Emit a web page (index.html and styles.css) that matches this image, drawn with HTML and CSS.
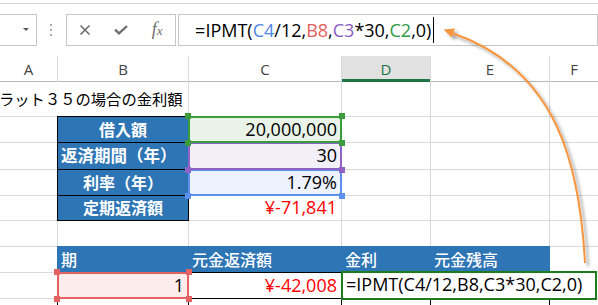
FILE: index.html
```html
<!DOCTYPE html>
<html lang="ja">
<head>
<meta charset="utf-8">
<title>IPMT</title>
<link rel="stylesheet" href="styles.css">
</head>
<body>
<div class="app">
  <div class="fbar">
    <div class="namebox"><span class="dd"></span></div>
    <div class="grip"><i></i><i></i><i></i></div>
    <div class="fbtns">
      <span class="slot"><svg width="12" height="12" viewBox="0 0 12 12"><path d="M1.5 1.5L10.5 10.5M10.5 1.5L1.5 10.5" stroke="#6e6e6e" stroke-width="1.6" fill="none"/></svg></span>
      <span class="slot"><svg width="14" height="10" viewBox="0 0 14 10"><path d="M1 4.6L5 8.4L13 1" stroke="#6e6e6e" stroke-width="2.3" fill="none"/></svg></span>
      <span class="slot"><span class="fx">f<small>x</small></span></span>
    </div>
    <div class="finput"><span class="ftext">=IPMT(<span class="rb">C4</span>/12,<span class="rr">B8</span>,<span class="rp">C3</span>*30,<span class="rg">C2</span>,0)</span><span class="caret"></span></div>
  </div>

  <div class="sheet">
    <div class="ch">A</div>
    <div class="ch">B</div>
    <div class="ch">C</div>
    <div class="ch ch-on">D</div>
    <div class="ch">E</div>
    <div class="ch">F</div>

    <div class="c title">ラット３５の場合の金利額</div>
    <div class="c"></div>
    <div class="c"></div>
    <div class="c"></div>
    <div class="c"></div>

    <div class="c"></div>
    <div class="c lbl">借入額</div>
    <div class="c val rng rng-g"><span class="h tl"></span><span class="h tr"></span><span class="h bl"></span><span class="h br"></span>20,000,000</div>
    <div class="c"></div>
    <div class="c"></div>
    <div class="c"></div>

    <div class="c"></div>
    <div class="c lbl lbl-wide">返済期間（年）</div>
    <div class="c val rng rng-p"><span class="h bl"></span><span class="h br"></span>30</div>
    <div class="c"></div>
    <div class="c"></div>
    <div class="c"></div>

    <div class="c"></div>
    <div class="c lbl">利率（年）</div>
    <div class="c val rng rng-b"><span class="h bl"></span><span class="h br"></span>1.79%</div>
    <div class="c"></div>
    <div class="c"></div>
    <div class="c"></div>

    <div class="c"></div>
    <div class="c lbl">定期返済額</div>
    <div class="c val neg">¥-71,841</div>
    <div class="c"></div>
    <div class="c"></div>
    <div class="c"></div>

    <div class="c"></div>
    <div class="c"></div>
    <div class="c"></div>
    <div class="c"></div>
    <div class="c"></div>
    <div class="c"></div>

    <div class="c"></div>
    <div class="c th">期</div>
    <div class="c th">元金返済額</div>
    <div class="c th">金利</div>
    <div class="c th">元金残高</div>
    <div class="c"></div>

    <div class="c"></div>
    <div class="c val tb rng rng-r"><span class="h tl"></span><span class="h tr"></span><span class="h bl"></span><span class="h br"></span>1</div>
    <div class="c val tb neg">¥-42,008</div>
    <div class="c tb edit-host"><div class="editor">=IPMT(C4/12,B8,C3*30,C2,0)</div></div>
    <div class="c tb"></div>
    <div class="c"></div>

    <div class="c"></div>
    <div class="c val tb">2</div>
    <div class="c val tb neg">¥-42,071</div>
    <div class="c tb"></div>
    <div class="c tb"></div>
    <div class="c"></div>
  </div>

  <svg class="arrow" width="598" height="305" viewBox="0 0 598 305">
    <defs>
      <filter id="sh" x="-20%" y="-20%" width="140%" height="140%">
        <feDropShadow dx="3" dy="3" stdDeviation="1.6" flood-color="#000" flood-opacity="0.35"/>
      </filter>
    </defs>
    <g filter="url(#sh)">
      <path d="M585 263C580 170 560 70 452 33" stroke="#f7963f" stroke-width="2" fill="none"/>
      <path d="M443.5 29.5L455 28.6L451.8 37.6Z" fill="#f7963f"/>
    </g>
  </svg>
</div>
</body>
</html>
```
FILE: styles.css
```css
* { box-sizing: border-box; margin: 0; padding: 0; }
html, body { width: 598px; height: 305px; overflow: hidden; background: #fff; }
body { font-family: "Open Sans", "Noto Sans CJK JP", sans-serif; color: #000; }

.app { position: relative; width: 598px; height: 305px; overflow: hidden; }

/* formula bar */
.fbar {
  margin-top: 3px;
  height: 53px;
  border-top: 1px solid #d5d5d5;
  padding-top: 10px;
  display: flex;
  align-items: flex-start;
}
.namebox {
  position: relative;
  width: 38px;
  height: 32px;
  border: 1px solid #c6c6c6;
  border-left: none;
}
.dd {
  position: absolute;
  left: 23px;
  top: 13px;
  width: 0;
  height: 0;
  border-left: 3.5px solid transparent;
  border-right: 3.5px solid transparent;
  border-top: 3.5px solid #595959;
}
.grip {
  margin-left: 13px;
  margin-top: 10px;
  display: flex;
  flex-direction: column;
  gap: 3px;
}
.grip i { display: block; width: 2px; height: 2px; background: #ababab; }
.fbtns {
  margin-left: 14px;
  width: 111px;
  height: 32px;
  border: 1px solid #c6c6c6;
  display: flex;
}
.slot {
  width: 36px;
  height: 30px;
  display: flex;
  align-items: center;
  justify-content: center;
}
.fx {
  font-family: "Liberation Serif", serif;
  font-style: italic;
  font-size: 18px;
  color: #6e6e6e;
  line-height: 1;
  margin-top: -3px;
}
.fx small { font-size: 13px; }
.finput {
  margin-left: 2px;
  width: 430px;
  height: 32px;
  border: 1px solid #c6c6c6;
  padding-left: 16px;
  display: flex;
  align-items: center;
  font-size: 18px;
  white-space: nowrap;
}
.ftext { line-height: 1; margin-top: -1px; }
.rb { color: #4f86e8; }
.rr { color: #e35d5d; }
.rp { color: #8a5cc4; }
.rg { color: #2e9a45; }
.caret { display: inline-block; width: 1px; height: 26px; background: #000; margin-left: 2px; }

/* sheet */
.sheet {
  display: grid;
  grid-template-columns: 57px 130px 152px 88px 118px 1fr;
  grid-template-rows: 25px 34px 25px 26px 25px 24px 25px 25px 25px 25px;
  gap: 1px;
  background: #dadada;
}
.ch {
  background: #fff;
  color: #444;
  font-size: 15px;
  display: flex;
  align-items: center;
  justify-content: center;
  box-shadow: 0 1px 0 #b8b8b8;
}
.ch-on {
  background: #e1e1e1;
  color: #217346;
  box-shadow: inset 0 -2px 0 #217346, 0 1px 0 #217346;
}
.c {
  background: #fff;
  display: flex;
  align-items: center;
  white-space: nowrap;
  font-size: 18px;
  padding: 0 4px 2px;
}
.title {
  grid-column: 1 / 3;
  font-family: "Noto Sans CJK JP", sans-serif;
  font-size: 15.3px;
  padding-left: 0;
  margin-left: -1px;
}
.lbl {
  background: #2e75b6;
  color: #fff;
  font-family: "Noto Sans CJK JP", sans-serif;
  font-weight: 700;
  font-size: 16px;
  justify-content: center;
  outline: 1px solid #000;
}
.lbl-wide { justify-content: flex-start; padding-left: 3px; font-size: 16.5px; }
.val { justify-content: flex-end; }
.neg { color: #ff0000; }
.th {
  background: #2e75b6;
  color: #fff;
  font-family: "Noto Sans CJK JP", sans-serif;
  font-weight: 500;
  font-size: 16px;
  padding-left: 3px;
  outline: 1px solid #2e75b6;
}
.tb { outline: 1px solid #000; }

/* reference range boxes */
.rng { position: relative; outline-width: 2px; outline-style: solid; outline-offset: -1px; }
.rng-g { background: #e9f3e7; outline-color: #3a9c3d; z-index: 3; }
.rng-p { background: #f2eff9; outline-color: #8e63c5; z-index: 2; }
.rng-b { background: #edf2fd; outline-color: #5d8ff0; z-index: 1; }
.rng-r { background: #fcecec; outline-color: #e46262; z-index: 1; }
.h {
  position: absolute;
  width: 6px;
  height: 6px;
  z-index: 4;
}
.rng-g .h { background: #3a9c3d; }
.rng-p .h { background: #8e63c5; }
.rng-b .h { background: #5d8ff0; }
.rng-r .h { background: #e46262; }
.tl { left: -4px; top: -4px; }
.tr { right: -4px; top: -4px; }
.bl { left: -4px; bottom: -4px; }
.br { right: -4px; bottom: -4px; }

/* in-cell editor */
.edit-host { position: relative; z-index: 5; }
.editor {
  position: absolute;
  left: -1px;
  top: -2px;
  width: 256px;
  height: 29px;
  border: 2px solid #1e7b1e;
  background: #fff;
  font-size: 18px;
  line-height: 23px;
  padding-left: 3px;
  white-space: nowrap;
}

.arrow { position: absolute; left: 0; top: 0; pointer-events: none; z-index: 10; }
```
